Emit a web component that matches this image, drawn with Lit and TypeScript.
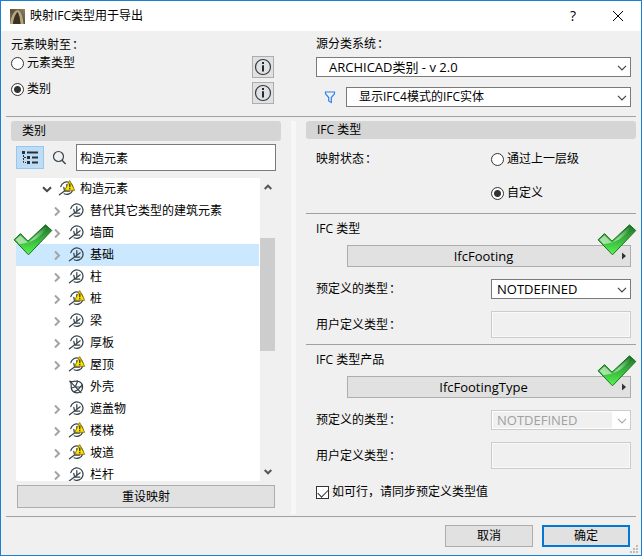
import { LitElement, html, css, svg, nothing } from "lit";
import { customElement, state } from "lit/decorators.js";
import { classMap } from "lit/directives/class-map.js";

type IconKind = "type" | "warn" | "none";
interface TreeRow {
  name: string;
  icon: IconKind;
  open?: boolean;
  leaf?: boolean;
}

const ROWS: TreeRow[] = [
  { name: "构造元素", icon: "warn", open: true },
  { name: "替代其它类型的建筑元素", icon: "type" },
  { name: "墙面", icon: "type" },
  { name: "基础", icon: "type" },
  { name: "柱", icon: "type" },
  { name: "桩", icon: "warn" },
  { name: "梁", icon: "type" },
  { name: "厚板", icon: "type" },
  { name: "屋顶", icon: "warn" },
  { name: "外壳", icon: "none", leaf: true },
  { name: "遮盖物", icon: "type" },
  { name: "楼梯", icon: "warn" },
  { name: "坡道", icon: "warn" },
  { name: "栏杆", icon: "type" },
];

const colon = html`<span class="colon">：</span>`;

const chevron = html`<svg class="chev" width="10" height="6" viewBox="0 0 10 6" aria-hidden="true">
  <path d="M1 .8 5 4.8 9 .8" fill="none" stroke="currentColor" stroke-width="1.2" />
</svg>`;

const infoIcon = html`<svg width="18" height="18" viewBox="0 0 18 18" aria-hidden="true">
  <circle cx="9" cy="9" r="7.5" fill="none" stroke="#2f3b45" stroke-width="1.2" />
  <rect x="8" y="4" width="2" height="2" fill="#1f2a33" />
  <path d="M8 7.3h2v6.2H8z" fill="#1f2a33" />
</svg>`;

const arrow = html`<svg class="arrow" width="4" height="8" viewBox="0 0 4 8" aria-hidden="true">
  <path d="M0 0.5 4 4 0 7.5z" fill="#333" />
</svg>`;

const rowIcon = (kind: IconKind) => html`<svg width="18" height="22" viewBox="0 0 18 22" aria-hidden="true">
  ${kind === "none"
    ? svg`<g fill="none" stroke="#37444d" stroke-width="1.2" stroke-linecap="round">
        <path d="M1.8 5.2C4 6.4 7 4.6 9.6 5.2 13 6 14.8 8.4 14.6 11.4 14.4 14.6 12 16.8 9 16.8 5.6 16.6 3.4 14.4 3.2 11.4 3 9 4 7 1.8 5.2z" />
        <path d="M1.8 5.2 13 16.6M9.6 5.2 7.4 10.8 3.4 12M14 8.8 10 13.8 6.4 15.6M7.4 10.8 14.4 11" />
      </g>`
    : svg`<g fill="none" stroke="#37444d" stroke-width="1.25" stroke-linecap="round">
        <path d="M2.8 8.6a6.2 6.2 0 1 1 3.4 7.2" />
        <path d="M1.4 16.8 8.6 11.4M8.8 6.6v5M8.6 11.4 12.2 8.8M5.8 9.4l.8 3.6M6.8 13h5" />
      </g>`}
  ${kind === "warn"
    ? svg`<path d="M11.7 2.6 16.7 12.3H6.7z" fill="#ffe600" stroke="#8a7400" stroke-width=".9" stroke-linejoin="round" />
        <path d="M11.2 5.5h1.2v3.7h-1.2zM11.2 10.1h1.2v1.1h-1.2z" fill="#222" />`
    : nothing}
</svg>`;

const tick = (place: string) => html`<svg class="tick ${place}" width="40" height="32" viewBox="0 0 40 32" aria-hidden="true">
  <defs>
    <linearGradient id="g" x1="0" y1="0" x2="0" y2="1">
      <stop offset="0" stop-color="#1d6b24" />
      <stop offset=".4" stop-color="#35a83a" />
      <stop offset="1" stop-color="#55f850" />
    </linearGradient>
    <linearGradient id="h" x1="0" y1="0" x2="1" y2="0">
      <stop offset="0" stop-color="#fff" stop-opacity=".6" />
      <stop offset=".6" stop-color="#dfffe0" stop-opacity=".5" />
      <stop offset="1" stop-color="#fff" stop-opacity="0" />
    </linearGradient>
  </defs>
  <path d="M1 15.8 7.5 9.6 15 17.2 32.5 .8 38.8 6.5 15.5 30.8z" fill="url(#g)" stroke="#18751c" stroke-linejoin="round" />
  <path d="M2.6 15.8 7.5 11.2 15 18.8 32.3 2.5 34 4C26 15 17 19.5 6.5 20z" fill="url(#h)" />
</svg>`;

@customElement("app-root")
export class AppRoot extends LitElement {
  @state() private selected = 3;

  static styles = css`
    :host {
      display: block;
      font: 12px/14px "Open Sans", "Noto Sans CJK SC", sans-serif;
      color: #000;
    }
    * { box-sizing: border-box; }
    button, input, select { font: inherit; color: inherit; margin: 0; }
    svg { display: block; flex: none; }
    .colon { margin-left: 1px; }
    .window {
      min-height: 100vh;
      display: flex;
      flex-direction: column;
      border: 1px solid #1a80d6;
      background: #f0f0f0;
      position: relative;
    }
    .titlebar {
      display: flex;
      align-items: center;
      height: 30px;
      padding: 0 8px 0 9px;
      background: #fff;
      gap: 5px;
    }
    .titlebar h1 { flex: 1; margin: 0; font-size: 12px; font-weight: 400; }
    .sys {
      width: 30px;
      height: 24px;
      padding: 0;
      border: 0;
      background: none;
      display: grid;
      place-items: center;
      font-size: 14px;
    }
    .sys.help { margin-right: 10px; }
    .cols { display: grid; grid-template-columns: 290px 1fr; }
    .head { padding-bottom: 9px; }
    .source, .target { display: flex; flex-direction: column; }
    .target { padding: 7px 17px 0 10px; gap: 4px; }
    .pick { display: flex; justify-content: space-between; align-items: flex-start; }
    .opt { display: flex; align-items: center; gap: 3px; }
    .source { padding: 6px 10px 0 25px; }
    .source .wide { margin-top: 6px; }
    .filter { display: flex; align-items: center; gap: 10px; margin-top: 10px; padding-left: 8px; }
    .rule { height: 1px; margin: 0 5px; border: 0; background: #a0a0a0; flex: none; }

    input[type="radio"], input[type="checkbox"] {
      appearance: none;
      width: 13px;
      height: 13px;
      flex: none;
      border: 1px solid #333;
      background: #fff;
    }
    input[type="radio"] { border-radius: 50%; }
    input[type="radio"]:checked { background: radial-gradient(circle, #333 3px, #fff 4px); }
    input[type="checkbox"] { display: grid; place-items: center; }
    input[type="checkbox"]:checked::after {
      content: "";
      width: 5px;
      height: 9px;
      border: solid #333;
      border-width: 0 1px 1px 0;
      transform: rotate(45deg);
      margin-bottom: 2px;
    }
    .info {
      width: 22px;
      height: 22px;
      padding: 0;
      border: 1px solid #adadad;
      background: #e1e1e1;
      display: grid;
      place-items: center;
    }
    .combo { position: relative; flex: 1; color: #000; }
    .combo select {
      appearance: none;
      display: block;
      width: 100%;
      height: 20px;
      padding: 0 20px 0 12px;
      border: 1px solid #7a7a7a;
      border-radius: 0;
      background: #fff;
      opacity: 1;
    }
    .combo.wide select, .combo.short select, .type { font-size: 13px; }
    .combo.short select { padding-left: 5px; }
    .combo.off { color: #a0a0a0; }
    .combo.off select {
      border-color: #ccc;
      background: linear-gradient(#f0f0f0, #f0f0f0) no-repeat 1px 1px / calc(100% - 19px) calc(100% - 2px), #fff;
    }
    .chev { position: absolute; right: 4px; top: 8px; color: #444; pointer-events: none; }
    .off .chev { color: #aaa; }

    .body { flex: 1; padding-bottom: 2px; }
    .left { display: flex; flex-direction: column; padding: 4px 10px 6px 10px; min-height: 0; position: relative; }
    .right { border-left: 5px solid #f7f7f7; padding: 0 5px 0 10px; margin-top: 4px; }
    .bar {
      margin: 0;
      padding: 0 11px;
      border-radius: 3px;
      background: #d5d5d5;
      font-size: 12px;
      font-weight: 400;
      line-height: 18px;
    }
    .left .bar { line-height: 20px; }
    .tools { display: flex; align-items: center; padding: 3px 5px 7px 5px; }
    .toggle {
      width: 28px;
      height: 23px;
      padding: 0;
      border: 1px solid #90c8f6;
      background: #c0dcf3;
      display: grid;
      place-items: center;
    }
    .mag { margin: 0 9px 0 8px; }
    .search {
      flex: 1;
      min-width: 0;
      height: 27px;
      padding: 0 3px;
      border: 1px solid #7a7a7a;
      border-radius: 0;
      background: #fff;
    }
    .tree-box { flex: 1; min-height: 303px; display: flex; margin: 0 6px 0 5px; }
    .tree {
      flex: 1;
      height: 0;
      min-height: 100%;
      overflow: hidden;
      margin: 0;
      padding: 0;
      list-style: none;
      background: #fff;
    }
    .row {
      display: flex;
      align-items: center;
      gap: 4px;
      height: 22px;
      padding-left: 34px;
      margin-right: 1px;
      line-height: 12px;
    }
    .row.top { padding-left: 24px; }
    .row.sel { background: #cce8ff; }
    .twist {
      width: 14px;
      height: 20px;
      padding: 0;
      border: 0;
      background: none;
      display: grid;
      place-items: center;
    }
    .scroll { width: 15px; display: flex; flex-direction: column; }
    .scroll button {
      height: 18px;
      padding: 0;
      border: 0;
      background: none;
      display: grid;
      place-items: center;
    }
    .track { flex: 1; display: flex; flex-direction: column; }
    .before { flex: 42; }
    .thumb { flex: 113; background: #cdcdcd; }
    .after { flex: 112; }
    .btn {
      height: 22px;
      padding: 0;
      border: 1px solid #adadad;
      background: #e1e1e1;
      position: relative;
    }
    .reset { height: 23px; margin: 4px 6px 0 6px; }
    .sect { padding: 5px 5px 6px 10px; border-top: 1px solid #a0a0a0; position: relative; }
    .sect.first { border: 0; padding: 10px 5px 10px 10px; }
    .grid { display: grid; grid-template-columns: 1fr 140px; align-items: center; }
    .states { grid-auto-rows: 20px; row-gap: 14px; }
    .states .second { grid-column: 2; }
    .fields { row-gap: 12px; margin-top: 12px; }
    .sect h3 { margin: 0 0 6px; font-size: 12px; font-weight: 400; line-height: 20px; }
    .type { display: block; width: calc(100% - 31px); margin-left: 31px; padding-right: 11px; }
    .arrow { position: absolute; right: 4px; top: 6px; }
    .field {
      width: 100%;
      height: 27px;
      border: 1px solid #ccc;
      border-radius: 0;
      background: #f0f0f0;
      box-shadow: inset 0 0 0 1px #f9f9f9;
    }
    .sync { margin: 7px 10px 0; height: 20px; }
    .tick { position: absolute; pointer-events: none; }
    .tick.on-tree { left: 12px; top: 107px; }
    .tick.on-type { right: -1px; top: 10px; z-index: 1; }
    .foot { display: flex; justify-content: flex-end; gap: 9px; padding: 8px 11px 8px 8px; }
    .foot .btn { width: 88px; }
    .foot .ok { border: 2px solid #0078d7; }
    .grip { position: absolute; right: 3px; bottom: 2px; }
  `;

  private typeSection(title: string, type: string, key: string, off: boolean) {
    return html`<section class="sect">
      <h3>${title}</h3>
      <button class="btn type">${type}${arrow}</button>
      ${tick("on-type")}
      <div class="grid fields">
        <label for="pre-${key}">预定义的类型${colon}</label>
        <div class=${classMap({ combo: true, short: true, off })}>
          <select id="pre-${key}" ?disabled=${off}><option>NOTDEFINED</option></select>${chevron}
        </div>
        <label for="user-${key}">用户定义类型${colon}</label>
        <input class="field" id="user-${key}" type="text" disabled />
      </div>
    </section>`;
  }

  private treeRow(r: TreeRow, i: number) {
    return html`<li
      role="treeitem"
      aria-selected=${i === this.selected}
      class=${classMap({ row: true, top: !!r.open, sel: i === this.selected })}
      @click=${() => (this.selected = i)}
    >
      ${r.leaf
        ? html`<span class="twist"></span>`
        : html`<button class="twist" aria-label=${r.open ? "收起" : "展开"}>
            <svg width="10" height="10" viewBox="0 0 10 10">
              ${r.open
                ? svg`<path d="M1 3.2 5 7.2 9 3.2" fill="none" stroke="#444" stroke-width="2" />`
                : svg`<path d="M3 1.5 7 5.5 3 9.5" fill="none" stroke="#a3a3a3" stroke-width="2" />`}
            </svg>
          </button>`}
      ${rowIcon(r.icon)}<span>${r.name}</span>
    </li>`;
  }

  render() {
    return html`<main class="window">
      <header class="titlebar">
        <svg width="15" height="15" viewBox="0 0 15 15" aria-hidden="true">
          <defs>
            <linearGradient id="a" x1="0" y1="1" x2="1" y2="0">
              <stop offset="0" stop-color="#8c7d60" />
              <stop offset=".5" stop-color="#5d5038" />
              <stop offset="1" stop-color="#8f8468" />
            </linearGradient>
          </defs>
          <rect width="15" height="15" fill="url(#a)" />
          <path d="M0 15C1 9 3 2 7.5 1 11 1.5 13 8 13.6 15H10.5C10 9 9 5 7.5 4 5 6 3.5 10 3 15z" fill="#b5a684" />
          <path d="M3 15C3.6 9 5.5 5 7.5 2.8 9 5 10 10 10.5 15z" fill="#3b3222" />
        </svg>
        <h1>映射IFC类型用于导出</h1>
        <button class="sys help" aria-label="帮助">?</button>
        <button class="sys" aria-label="关闭">
          <svg width="10" height="10" viewBox="0 0 10 10"><path d="M0 0 10 10M10 0 0 10" stroke="#000" /></svg>
        </button>
      </header>

      <div class="cols head">
        <div class="target" role="radiogroup" aria-labelledby="map-to">
          <span id="map-to">元素映射至${colon}</span>
          <div class="pick">
            <label class="opt"><input type="radio" name="target" />元素类型</label>
            <button class="info" aria-label="元素类型信息">${infoIcon}</button>
          </div>
          <div class="pick">
            <label class="opt"><input type="radio" name="target" checked />类别</label>
            <button class="info" aria-label="类别信息">${infoIcon}</button>
          </div>
        </div>
        <div class="source">
          <label for="system">源分类系统${colon}</label>
          <div class="combo wide"><select id="system"><option>ARCHICAD类别 - v 2.0</option></select>${chevron}</div>
          <div class="filter">
            <svg width="12" height="14" viewBox="0 0 12 14" aria-hidden="true">
              <path d="M1.5 2h9v1.8L7.3 7.5v5L4.7 11V7.5L1.5 3.8z" fill="none" stroke="#2f7ff0" stroke-width="1.2" />
            </svg>
            <div class="combo">
              <select aria-label="IFC 模式"><option>显示IFC4模式的IFC实体</option></select>${chevron}
            </div>
          </div>
        </div>
      </div>
      <hr class="rule" />

      <div class="cols body">
        <section class="left">
          <h2 class="bar">类别</h2>
          <div class="tools">
            <button class="toggle" aria-label="树形视图">
              <svg width="16" height="13" viewBox="0 0 16 13">
                <path d="M0 0h3v3H0zM5 5h3v3H5zM5 10h3v3H5zM5 .5h11v2H5zM10 5.5h6v2h-6zM10 10.5h6v2h-6z" fill="#26333d" />
                <path d="M1.5 4v7.5H4M2 6.5h2" fill="none" stroke="#26333d" stroke-dasharray="2 1" />
              </svg>
            </button>
            <svg class="mag" width="15" height="15" viewBox="0 0 15 15" aria-hidden="true">
              <circle cx="6.5" cy="6.5" r="5" fill="none" stroke="#37444d" stroke-width="1.2" />
              <path d="M10 10.3 13.6 14" stroke="#37444d" stroke-width="1.4" />
            </svg>
            <input class="search" type="text" aria-label="搜索" value="构造元素" />
          </div>
          <div class="tree-box">
            <ul class="tree" role="tree">${ROWS.map((r, i) => this.treeRow(r, i))}</ul>
            <div class="scroll">
              <button aria-label="向上">
                <svg width="8" height="6" viewBox="0 0 8 6"><path d="M.7 5 4 1.7 7.3 5" fill="none" stroke="#555" stroke-width="2" /></svg>
              </button>
              <div class="track"><div class="before"></div><div class="thumb"></div><div class="after"></div></div>
              <button aria-label="向下">
                <svg width="8" height="6" viewBox="0 0 8 6"><path d="M.7 1 4 4.3 7.3 1" fill="none" stroke="#555" stroke-width="2" /></svg>
              </button>
            </div>
          </div>
          <button class="btn reset">重设映射</button>
          ${tick("on-tree")}
        </section>

        <section class="right">
          <h2 class="bar">IFC 类型</h2>
          <div class="sect first grid states" role="radiogroup" aria-labelledby="state">
            <span id="state">映射状态${colon}</span>
            <label class="opt"><input type="radio" name="state" />通过上一层级</label>
            <label class="opt second"><input type="radio" name="state" checked />自定义</label>
          </div>
          ${this.typeSection("IFC 类型", "IfcFooting", "type", false)}
          ${this.typeSection("IFC 类型产品", "IfcFootingType", "product", true)}
          <label class="opt sync"><input type="checkbox" checked />如可行，请同步预定义类型值</label>
        </section>
      </div>
      <hr class="rule" />

      <footer class="foot">
        <button class="btn">取消</button>
        <button class="btn ok">确定</button>
      </footer>
      <svg class="grip" width="8" height="8" viewBox="0 0 8 8" aria-hidden="true">
        <path d="M6 0h2v2H6zM3 3h2v2H3zM6 3h2v2H6zM0 6h2v2H0zM3 6h2v2H3zM6 6h2v2H6z" fill="#bcbcbc" />
      </svg>
    </main>`;
  }
}
